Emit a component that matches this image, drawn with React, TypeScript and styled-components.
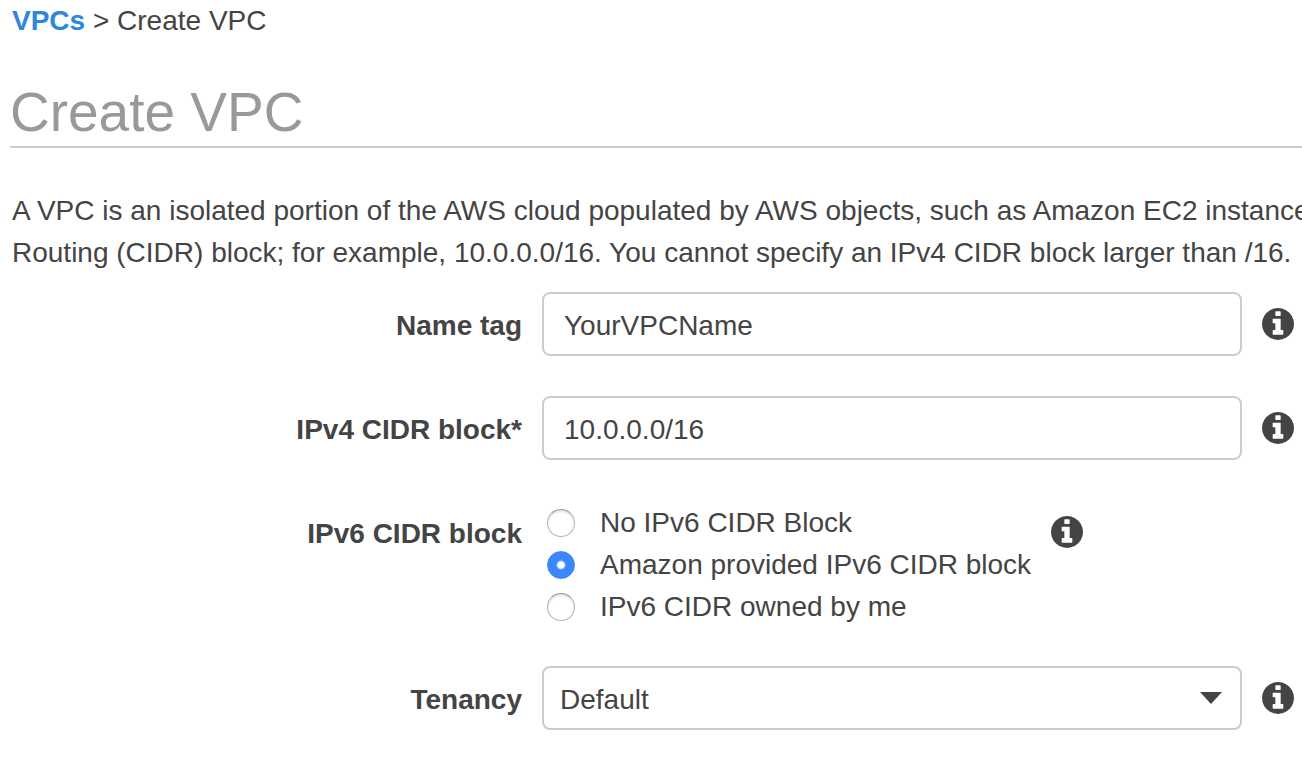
import React from "react";
import styled, { createGlobalStyle } from "styled-components";

const GlobalStyle = createGlobalStyle`
  * { box-sizing: border-box; }
  body {
    margin: 0;
    background: #fff;
    color: #444;
    font: 28px/42px "Liberation Sans", Arial, sans-serif;
    overflow-x: hidden;
  }
`;

const Page = styled.main`
  padding-left: 10px;
`;

const Breadcrumb = styled.nav`
  padding-left: 2px;
`;

const Crumb = styled.a`
  color: #2e86dd;
  font-weight: bold;
  text-decoration: none;
`;

const Title = styled.h1`
  margin: 38px 0 0;
  padding-bottom: 2px;
  border-bottom: 2px solid #ccc;
  color: #999;
  font-size: 55px;
  font-weight: normal;
  line-height: 64px;
`;

const Intro = styled.p`
  margin: 42px 0 18px;
  padding-left: 2px;
  overflow: hidden;
  white-space: nowrap;
`;

const Form = styled.form`
  display: grid;
  gap: 40px;
`;

const Row = styled.div`
  display: flex;
  align-items: flex-start;
  gap: 20px;
`;

const Label = styled.label`
  flex: 0 0 512px;
  padding-top: 3px;
  line-height: 61px;
  text-align: right;
  font-weight: bold;
`;

const TextInput = styled.input`
  flex: 0 1 700px;
  min-width: 0;
  height: 64px;
  padding: 3px 20px 0;
  border: 2px solid #ccc;
  border-radius: 8px;
  background: #fff;
  color: #444;
  font: inherit;
`;

const SelectWrap = styled.div`
  display: grid;
  flex: 0 1 700px;
  align-items: center;

  > * { grid-area: 1 / 1; }
  > svg { justify-self: end; margin-right: 20px; pointer-events: none; }
`;

const Select = styled.select`
  height: 64px;
  padding: 3px 16px 0;
  border: 2px solid #ccc;
  border-radius: 8px;
  background: #fff;
  color: #444;
  font: inherit;
  appearance: none;
`;

const Options = styled.div`
  display: grid;
  margin: 2px 0 -2px;
`;

const Option = styled.label`
  display: flex;
  align-items: center;
  gap: 25px;
  padding-left: 5px;
`;

const Radio = styled.input`
  appearance: none;
  width: 28px;
  height: 28px;
  margin: 0;
  border: 1px solid #b4b4b4;
  border-top-color: #989898;
  border-radius: 50%;
  background: #fff;
  box-shadow: inset 0 2px 2px #e4e4e4;

  &:checked {
    border-color: #3b86f7;
    background: radial-gradient(circle, #fff 3px, #3b87fd 5px);
    box-shadow: none;
  }
`;

const InfoButton = styled.button`
  display: flex;
  align-items: center;
  height: 64px;
  padding: 0;
  border: 0;
  background: none;
  color: #444;
`;

const Info = ({ topic }: { topic: string }) => (
  <InfoButton type="button" aria-label={`About ${topic}`}>
    <svg width="32" height="32" viewBox="0 128 1536 1536" fill="currentColor" aria-hidden="true">
      <path d="M1024 1376v-160q0-14-9-23t-23-9h-96v-512q0-14-9-23t-23-9h-320q-14 0-23 9t-9 23v160q0 14 9 23t23 9h96v320h-96q-14 0-23 9t-9 23v160q0 14 9 23t23 9h448q14 0 23-9t9-23zm-128-896v-160q0-14-9-23t-23-9h-192q-14 0-23 9t-9 23v160q0 14 9 23t23 9h192q14 0 23-9t9-23zm640 416q0 209-103 385.500t-279.500 279.500-385.500 103-385.500-103-279.500-279.500-103-385.500 103-385.500 279.500-279.500 385.500-103 385.500 103 279.500 279.500 103 385.500z" />
    </svg>
  </InfoButton>
);

export default function App() {
  return (
    <Page>
      <GlobalStyle />
      <Breadcrumb>
        <Crumb href="#vpcs">VPCs</Crumb> &gt; Create VPC
      </Breadcrumb>
      <Title>Create VPC</Title>
      <Intro>
        A VPC is an isolated portion of the AWS cloud populated by AWS objects, such as Amazon EC2 instances.
        <br />
        Routing (CIDR) block; for example, 10.0.0.0/16. You cannot specify an IPv4 CIDR block larger than /16.
      </Intro>
      <Form>
        <Row>
          <Label htmlFor="name">Name tag</Label>
          <TextInput id="name" type="text" defaultValue="YourVPCName" />
          <Info topic="Name tag" />
        </Row>
        <Row>
          <Label htmlFor="ipv4">IPv4 CIDR block*</Label>
          <TextInput id="ipv4" type="text" defaultValue="10.0.0.0/16" />
          <Info topic="IPv4 CIDR block" />
        </Row>
        <Row role="radiogroup" aria-labelledby="ipv6">
          <Label as="span" id="ipv6">IPv6 CIDR block</Label>
          <Options>
            <Option><Radio type="radio" name="ipv6" />No IPv6 CIDR Block</Option>
            <Option><Radio type="radio" name="ipv6" defaultChecked />Amazon provided IPv6 CIDR block</Option>
            <Option><Radio type="radio" name="ipv6" />IPv6 CIDR owned by me</Option>
          </Options>
          <Info topic="IPv6 CIDR block" />
        </Row>
        <Row>
          <Label htmlFor="tenancy">Tenancy</Label>
          <SelectWrap>
            <Select id="tenancy" defaultValue="Default">
              <option>Default</option>
              <option>Dedicated</option>
            </Select>
            <svg width="22" height="12" viewBox="0 0 22 12" aria-hidden="true">
              <path d="M0 0h22L11 12z" fill="#444" />
            </svg>
          </SelectWrap>
          <Info topic="Tenancy" />
        </Row>
      </Form>
    </Page>
  );
}
